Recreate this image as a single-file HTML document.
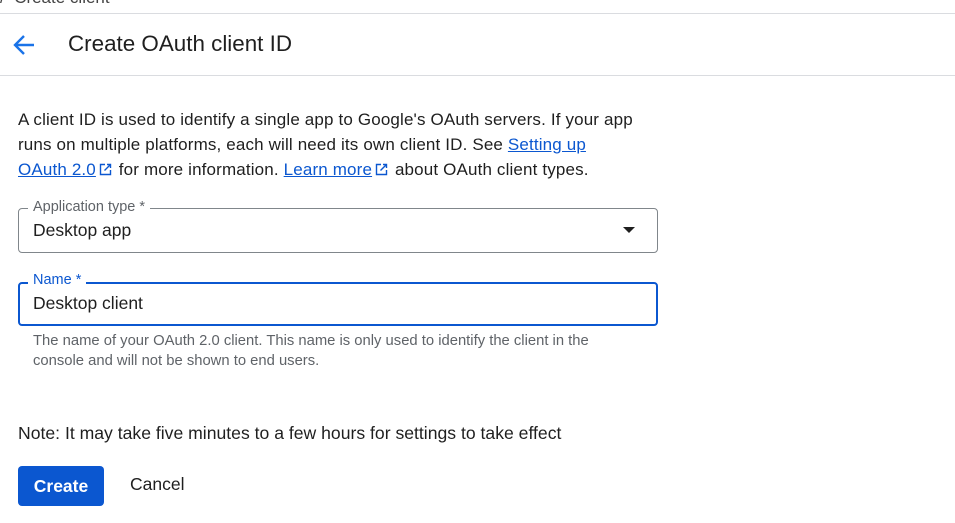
<!DOCTYPE html>
<html><head><meta charset="utf-8"><style>
*{margin:0;padding:0;box-sizing:border-box}
body{width:955px;height:523px;background:#fff;font-family:"Liberation Sans",Arial,sans-serif;color:#1f1f1f;position:relative;overflow:hidden}
.a{position:absolute}
.lnk{color:#0b57d0;text-decoration:underline}
.ext{display:inline-block;vertical-align:-1px;margin:0 2px 0 3px}
</style></head><body>
<div class="a" style="left:0;top:-12px;font-size:17px;color:#444">/&nbsp; Create client</div>
<div class="a" style="left:0;top:13px;width:955px;height:1px;background:#dadce0"></div>
<svg class="a" style="left:12px;top:34px" width="24" height="22" viewBox="0 0 24 22"><path d="M22 11H4M12 2L3 11l9 9" fill="none" stroke="#1a73e8" stroke-width="2.4"/></svg>
<div class="a" style="left:68px;top:31px;font-size:22.4px;color:#1f1f1f">Create OAuth client ID</div>
<div class="a" style="left:0;top:75px;width:955px;height:1px;background:#dadce0"></div>
<div class="a" style="left:18px;top:107px;width:628px;font-size:17px;letter-spacing:0.15px;line-height:25px;color:#1f1f1f">A client ID is used to identify a single app to Google's OAuth servers. If your app runs on multiple platforms, each will need its own client ID. See <span class="lnk">Setting up</span><br><span class="lnk">OAuth 2.0</span><svg class="ext" width="13" height="13" viewBox="0 0 13 13"><path d="M6 1.5H1.5v10h10V7M8 1.5h3.5V5M11.5 1.5L5.5 7.5" fill="none" stroke="#0b57d0" stroke-width="1.4"/></svg> for more information. <span class="lnk">Learn more</span><svg class="ext" width="13" height="13" viewBox="0 0 13 13"><path d="M6 1.5H1.5v10h10V7M8 1.5h3.5V5M11.5 1.5L5.5 7.5" fill="none" stroke="#0b57d0" stroke-width="1.4"/></svg> about OAuth client types.</div>
<div class="a" style="left:18px;top:208px;width:640px;height:45px;border:1px solid #80868b;border-radius:4px"></div>
<div class="a" style="left:28px;top:199px;background:#fff;padding:0 5px;font-size:14.5px;color:#5f6368">Application type *</div>
<div class="a" style="left:33px;top:220px;font-size:17.5px;color:#1f1f1f">Desktop app</div>
<div class="a" style="left:623px;top:227px;width:0;height:0;border-left:6px solid transparent;border-right:6px solid transparent;border-top:6px solid #1f1f1f"></div>
<div class="a" style="left:18px;top:282px;width:640px;height:44px;border:2px solid #0b57d0;border-radius:4px"></div>
<div class="a" style="left:28px;top:272px;background:#fff;padding:0 5px;font-size:14.5px;color:#0b57d0">Name *</div>
<div class="a" style="left:33px;top:293px;font-size:17.5px;color:#1f1f1f">Desktop client</div>
<div class="a" style="left:33px;top:331px;width:580px;font-size:14.8px;line-height:20px;color:#5f6368">The name of your OAuth 2.0 client. This name is only used to identify the client in the console and will not be shown to end users.</div>
<div class="a" style="left:18px;top:423px;font-size:17.6px;color:#1f1f1f">Note: It may take five minutes to a few hours for settings to take effect</div>
<div class="a" style="left:18px;top:466px;width:86px;height:40px;background:#0b57d0;border-radius:4px;color:#fff;font-size:17.5px;font-weight:bold;line-height:40px;text-align:center">Create</div>
<div class="a" style="left:130px;top:474px;font-size:17.5px;color:#1f1f1f">Cancel</div>
</body></html>
